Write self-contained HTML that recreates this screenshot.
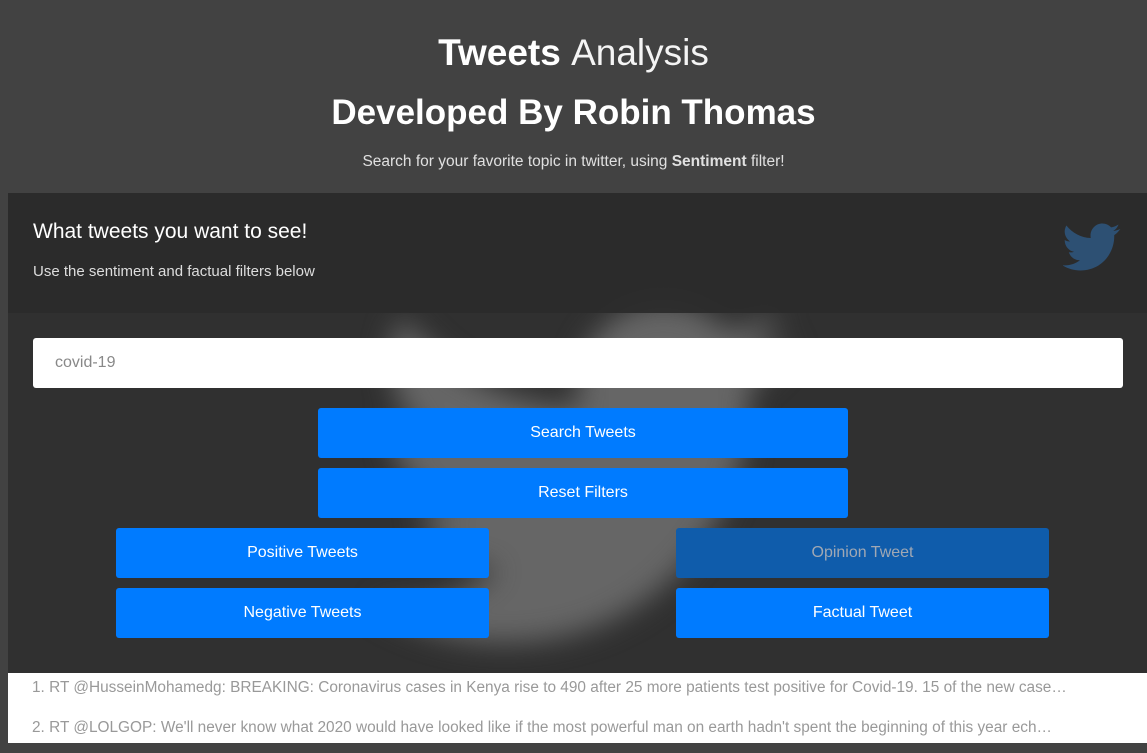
<!DOCTYPE html>
<html><head><style>
body{margin:0;width:1147px;height:753px;background:#424242;font-family:"Liberation Sans",sans-serif;overflow:hidden;position:relative}
.t1{position:absolute;top:30px;width:100%;text-align:center;color:#fff;font-size:37px;line-height:46px}
.t2{position:absolute;top:90px;width:100%;text-align:center;color:#fff;font-size:35px;font-weight:bold;line-height:46px}
.t3{position:absolute;top:152px;width:100%;text-align:center;color:#e0e0e0;font-size:15.5px;line-height:20px}
.panel{position:absolute;left:8px;top:193px;width:1139px;height:480px;background:#303030;overflow:hidden}
.head{position:absolute;left:0;top:0;width:100%;height:120px;background:#2b2b2b;opacity:.93}
.bird{position:absolute;left:340px;top:70px;filter:blur(14px)}
h3{position:absolute;left:25px;top:27px;margin:0;font-weight:normal;color:#fff;font-size:21px}
.sub{position:absolute;left:25px;top:70px;color:#ddd;font-size:15px}
.inp{position:absolute;left:25px;top:145px;width:1090px;height:50px;background:#fff;border-radius:3px;color:#888;font-size:16px;line-height:50px;box-sizing:border-box;padding-left:22px}
.b{position:absolute;background:#007bff;color:#fff;font-size:16px;text-align:center;line-height:50px;height:50px;border-radius:3px}
.list{position:absolute;left:8px;top:673px;width:1139px;height:70px;background:#fff;color:#999;font-size:15.4px}
.list div{position:absolute;left:24px;white-space:nowrap}
</style></head><body>
<div class="t1"><b>Tweets</b> <span style="font-weight:300;color:#f4f4f4">Analysis</span></div>
<div class="t2">Developed By Robin Thomas</div>
<div class="t3">Search for your favorite topic in twitter, using <b>Sentiment</b> filter!</div>
<div class="panel">
<svg class="bird" width="480" height="420" viewBox="0 0 24 24"><path fill="#666" d="M23.6 4.6c-.9.4-1.8.6-2.8.8 1-.6 1.8-1.6 2.2-2.7-1 .6-2 1-3.1 1.2-.9-1-2.2-1.6-3.6-1.6-2.7 0-4.9 2.2-4.9 4.9 0 .4 0 .8.1 1.1C7.400 8.1 3.800 6.2 1.400 3.100c-.4.700-.7 1.600-.7 2.500 0 1.700.9 3.200 2.200 4.100-.8 0-1.600-.2-2.200-.6v.1c0 2.400 1.700 4.400 3.900 4.800-.4.100-.8.200-1.300.200-.3 0-.6 0-.9-.1.600 2 2.400 3.400 4.600 3.400-1.700 1.300-3.800 2.100-6.100 2.100-.4 0-.8 0-1.200-.1 2.200 1.400 4.800 2.200 7.500 2.200 9.100 0 14-7.500 14-14v-.6c1-.7 1.800-1.600 2.500-2.500z"/></svg>
<div class="head"></div>
<h3>What tweets you want to see!</h3>
<div class="sub">Use the sentiment and factual filters below</div>
<svg style="position:absolute;left:1055px;top:29px" width="58" height="50" viewBox="0 0 24 20"><path fill="#2d5073" d="M23.6 2.6c-.9.4-1.8.6-2.8.8 1-.6 1.8-1.6 2.200-2.700-1 .6-2 1-3.1 1.2-.9-1-2.2-1.6-3.6-1.6-2.7 0-4.9 2.2-4.9 4.9 0 .4 0 .8.1 1.1C7.400 6.100 3.800 4.200 1.400 1.100c-.4.700-.7 1.600-.7 2.500 0 1.700.9 3.200 2.200 4.100-.8 0-1.600-.2-2.200-.6v.1c0 2.400 1.700 4.400 3.900 4.800-.4.1-.8.2-1.300.2-.3 0-.6 0-.9-.1.6 2 2.400 3.400 4.600 3.400-1.700 1.300-3.800 2.100-6.100 2.100-.4 0-.8 0-1.200-.1 2.200 1.400 4.800 2.200 7.500 2.200 9.100 0 14-7.500 14-14v-.6c1-.7 1.800-1.600 2.500-2.500z"/></svg>
<div class="inp">covid-19</div>
<div class="b" style="left:310px;top:215px;width:530px">Search Tweets</div>
<div class="b" style="left:310px;top:275px;width:530px">Reset Filters</div>
<div class="b" style="left:108px;top:335px;width:373px">Positive Tweets</div>
<div class="b" style="left:108px;top:395px;width:373px">Negative Tweets</div>
<div class="b" style="left:668px;top:335px;width:373px;background:#0f5cab;color:#a0a8b4">Opinion Tweet</div>
<div class="b" style="left:668px;top:395px;width:373px">Factual Tweet</div>
</div>
<div class="list">
<div style="top:6px">1. RT @HusseinMohamedg: BREAKING: Coronavirus cases in Kenya rise to 490 after 25 more patients test positive for Covid-19. 15 of the new case…</div>
<div style="top:46px">2. RT @LOLGOP: We'll never know what 2020 would have looked like if the most powerful man on earth hadn't spent the beginning of this year ech…</div>
</div>
</body></html>
